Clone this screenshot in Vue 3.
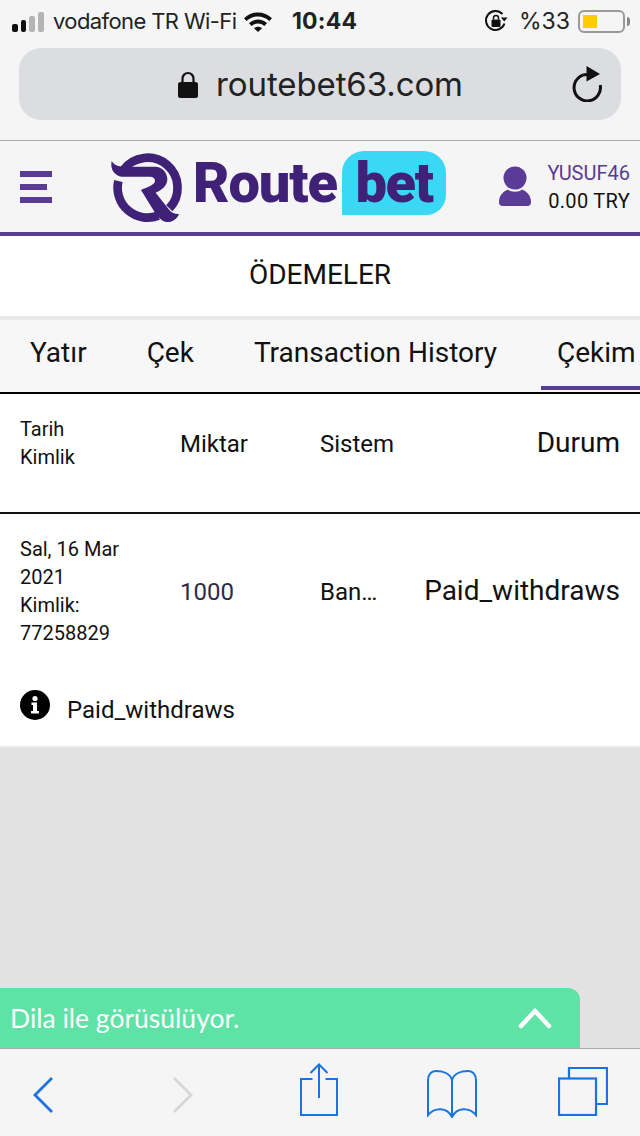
<script setup>
const tabs = [
  { label: 'Yatır', cls: 'tab-a' },
  { label: 'Çek', cls: 'tab-b' },
  { label: 'Transaction History', cls: 'tab-c' },
  { label: 'Çekim', cls: 'tab-d active' },
]
</script>

<template>
  <div class="phone">
    <div class="browser-top">
      <div class="status">
        <div class="signal"><i class="b1"></i><i class="b2"></i><i class="b3"></i><i class="b4"></i></div>
        <span class="carrier">vodafone TR Wi-Fi</span>
        <svg class="wifi" width="30" height="22" viewBox="0 0 30 22">
          <path d="M1 8.200C9 .6 21 .6 29 8.200l-2.600 2.700C19.900 4.900 10.100 4.900 3.600 10.900z" fill="#111"/>
          <path d="M6 13.200c5.200-4.800 12.800-4.800 18 0l-2.600 2.700c-3.800-3.300-9-3.300-12.800 0z" fill="#111"/>
          <path d="M11 18.200c2.400-2 5.600-2 8 0L15 22z" fill="#111"/>
        </svg>
        <span class="time">10:44</span>
        <svg class="rot" width="24" height="24" viewBox="0 0 24 24">
          <path d="M20.500 14.500A9.500 9.500 0 1 1 18.500 5" fill="none" stroke="#111" stroke-width="2"/>
          <path d="M23.500 8.500l-3.200 4-3.400-4z" fill="#111"/>
          <rect x="7.500" y="10.500" width="9" height="7.500" rx="1.200" fill="#111"/>
          <path d="M9.500 10.500V9a2.500 2.500 0 0 1 5 0v1.500" fill="none" stroke="#111" stroke-width="1.500"/>
        </svg>
        <span class="pct">%33</span>
        <div class="battery"><i></i></div>
        <div class="nub"></div>
      </div>
      <div class="url">
        <svg class="lock" width="20" height="27" viewBox="0 0 20 27">
          <path d="M4.500 12V7.500a5.500 5.500 0 0 1 11 0V12" fill="none" stroke="#111" stroke-width="2.200"/>
          <rect y="11" width="20" height="16" rx="2.500" fill="#111"/>
        </svg>
        <span class="domain">routebet63.com</span>
        <svg class="reload" width="32" height="36" viewBox="0 0 32 36">
          <path d="M17 8.500A13.200 13.200 0 1 0 29.200 19" fill="none" stroke="#111" stroke-width="3"/>
          <path d="M15.500 0L29 8 15.500 15.500z" fill="#111"/>
        </svg>
      </div>
    </div>

    <header class="site-head">
      <div class="burger"><i></i><i class="short"></i><i></i></div>
      <div class="logo">
        <svg class="mark" width="85" height="80" viewBox="0 0 255 240">
          <path d="M55 72A90 90 0 1 1 193 187" fill="none" stroke="#3f2178" stroke-width="26"/>
          <path d="M40 105A90 90 0 0 0 160 209" fill="none" stroke="#3f2178" stroke-width="26"/>
          <path d="M20 45C28 58 40 62 60 62H150C172 62 187 80 187 100C187 118 172 132 152 140L190 188C198 200 210 205 222 204C216 220 200 230 186 228C170 226 160 212 150 200L108 132C122 124 150 118 150 104C150 96 142 92 135 92H50C30 90 14 70 20 45Z" fill="#3f2178"/>
        </svg>
        <span class="route">Route</span>
        <span class="bet">bet</span>
      </div>
      <div class="account">
        <svg class="user" width="32" height="42" viewBox="0 0 32 42">
          <circle cx="16" cy="12" r="11.500" fill="#5a3b95"/>
          <path d="M0 36C0 29 5 25 9 23.500C12 26.500 20 26.500 23 23.500C27 25 32 29 32 36C32 39 30.500 40 28 40H4C1.500 40 0 39 0 36Z" fill="#5a3b95"/>
        </svg>
        <div class="acc-text">
          <div class="acc-name">YUSUF46</div>
          <div class="acc-bal">0.00 TRY</div>
        </div>
      </div>
    </header>

    <div class="title">ÖDEMELER</div>

    <nav class="tabs">
      <span v-for="t in tabs" :key="t.label" class="tab" :class="t.cls">{{ t.label }}</span>
    </nav>

    <section class="table">
      <div class="row head">
        <div class="c-date">Tarih<br>Kimlik</div>
        <div class="c-amt">Miktar</div>
        <div class="c-sys">Sistem</div>
        <div class="c-stat">Durum</div>
      </div>
      <div class="row body">
        <div class="c-date">Sal, 16 Mar<br>2021<br>Kimlik:<br>77258829</div>
        <div class="c-amt num">1000</div>
        <div class="c-sys">Ban…</div>
        <div class="c-stat big">Paid_withdraws</div>
      </div>
      <div class="info">
        <svg width="30" height="30" viewBox="0 0 30 30">
          <circle cx="15" cy="15" r="15" fill="#000"/>
          <circle cx="15" cy="8.500" r="2.600" fill="#fff"/>
          <path d="M11.500 12.500h5.500v8.500h2v2.500h-8v-2.500h2v-6h-1.500z" fill="#fff"/>
        </svg>
        <span>Paid_withdraws</span>
      </div>
    </section>

    <main class="empty">
      <div class="chat">
        <span>Dila ile görüsülüyor.</span>
        <svg width="34" height="22" viewBox="0 0 34 22">
          <path d="M3 19L17 4l14 15" fill="none" stroke="#fff" stroke-width="4.500" stroke-linecap="round"/>
        </svg>
      </div>
    </main>

    <footer class="toolbar">
      <svg class="t-back" width="20" height="36" viewBox="0 0 20 36">
        <path d="M19 1L2 18l17 17" fill="none" stroke="#1a73e0" stroke-width="2.800"/>
      </svg>
      <svg class="t-fwd" width="20" height="36" viewBox="0 0 20 36">
        <path d="M1 1l17 17L1 35" fill="none" stroke="#d6d6d8" stroke-width="2.800"/>
      </svg>
      <svg class="t-share" width="38" height="53" viewBox="0 0 38 53">
        <path d="M12.500 16H1v36h36V16H25.500" fill="none" stroke="#1a73e0" stroke-width="2"/>
        <path d="M19 35V2M10.500 10L19 1.500 27.500 10" fill="none" stroke="#1a73e0" stroke-width="2"/>
      </svg>
      <svg class="t-book" width="50" height="48" viewBox="0 0 50 48">
        <path d="M25 10C23 3 15 1 9 1C4 1 1 5 1 10V45C8 37 20 37 25 47C30 37 42 37 49 45V10C49 5 46 1 41 1C35 1 27 3 25 10ZM25 10V47" fill="none" stroke="#1a73e0" stroke-width="2"/>
      </svg>
      <svg class="t-tabs" width="50" height="49" viewBox="0 0 50 49">
        <path d="M11 11V1h38v36H38" fill="none" stroke="#1a73e0" stroke-width="2.200"/>
        <rect x="1" y="11.500" width="37" height="36.500" fill="none" stroke="#1a73e0" stroke-width="2.200"/>
      </svg>
    </footer>
  </div>
</template>

<style>
html, body { margin: 0; padding: 0; }
</style>

<style scoped>
.phone {
  width: 640px;
  height: 1136px;
  display: flex;
  flex-direction: column;
  overflow: hidden;
  background: #e2e2e2;
  font-family: Roboto, "Liberation Sans", sans-serif;
  color: #111;
}
.browser-top {
  box-sizing: border-box;
  background: #f5f5f5;
  border-bottom: 1px solid #aaa;
  flex: none;
  height: 141px;
}
.status {
  height: 42px;
  display: flex;
  align-items: center;
  padding-left: 12px;
  font-family: Inter, "Liberation Sans", sans-serif;
  font-size: 23px;
  color: #222;
}
.signal { display: flex; align-items: flex-end; gap: 3px; height: 21px; width: 34px; }
.signal i { display: block; width: 5.500px; border-radius: 2px; background: #111; }
.signal .b1 { height: 8px; }
.signal .b2 { height: 12px; }
.signal .b3 { height: 16px; background: #b4b4b4; }
.signal .b4 { height: 20px; background: #b4b4b4; width: 6px; }
.carrier { margin-left: 7px; width: 184px; font-size: 22px; letter-spacing: -0.6px; white-space: nowrap; }
.wifi { margin-left: 6px; }
.time { margin-left: 19px; width: 65px; font-weight: 700; letter-spacing: 0.2px; }
.rot { margin-left: 127px; }
.pct { margin-left: 11px; width: 51px; }
.battery {
  margin-left: 8px;
  width: 47px;
  height: 23px;
  box-sizing: border-box;
  border: 2px solid #999;
  border-radius: 6px;
  padding: 3px;
}
.battery i { display: block; width: 14px; height: 100%; background: #ffcc00; }
.nub { width: 3px; height: 9px; margin-left: 2px; background: #888; border-radius: 0 3px 3px 0; }
.url {
  margin: 6px 19px 0;
  height: 72px;
  border-radius: 22px;
  background: #dcdde0;
  display: flex;
  align-items: center;
  padding-left: 159px;
  font-family: Inter, "Liberation Sans", sans-serif;
}
.domain { margin-left: 18px; width: 244px; font-size: 33px; letter-spacing: -0.1px; white-space: nowrap; color: #222; }
.reload { margin-left: 111px; }

.site-head {
  flex: none;
  height: 95px;
  box-sizing: border-box;
  border-bottom: 4px solid #5a3b95;
  background: #f5f5f5;
  display: flex;
  align-items: center;
}
.burger { margin-left: 20px; width: 32px; display: flex; flex-direction: column; gap: 7px; margin-top: 1px; }
.burger i { display: block; height: 6px; background: #5a3b95; }
.burger .short { width: 27px; }
.logo { margin-left: 53px; display: flex; align-items: center; height: 80px; }
.mark { margin-top: -2px; }
.route {
  margin-left: 3px;
  width: 149px;
  font-weight: 900;
  font-size: 56px;
  letter-spacing: -1.1px;
  color: #3f2178;
  line-height: 1;
  margin-top: -7px;
}
.bet {
  box-sizing: border-box;
  width: 104px;
  height: 64px;
  margin-top: -8px;
  background: #3ad8f5;
  border-radius: 22px 22px 20px 0;
  font-weight: 900;
  font-size: 56px;
  letter-spacing: -1.500px;
  color: #3f2178;
  text-align: center;
  line-height: 64px;
}
.account { margin-left: auto; display: flex; align-items: center; padding-right: 10px; }
.user { margin-right: 17px; }
.acc-text { text-align: right; font-size: 20px; line-height: 28px; }
.acc-name { color: #5a3b95; }
.acc-bal { color: #111; letter-spacing: 0.3px; }

.title {
  flex: none;
  height: 80px;
  box-sizing: border-box;
  padding-bottom: 4px;
  background: #fff;
  display: flex;
  align-items: center;
  justify-content: center;
  font-size: 28px;
  color: #111;
}
.tabs {
  flex: none;
  height: 78px;
  box-sizing: border-box;
  display: flex;
  background: #f7f7f7;
  border-top: 4px solid #e8e8e8;
  border-bottom: 2px solid #000;
  padding-left: 14px;
  overflow: hidden;
  font-size: 28px;
}
.tab { display: block; padding: 0 16px; line-height: 65px; white-space: nowrap; flex: none; height: 70px; box-sizing: border-box; }
.tab-b { margin-left: 28px; }
.tab-c { margin-left: 28px; }
.tab-d { margin-left: 28px; padding-right: 40px; }
.active { border-bottom: 4px solid #5a3b95; }

.table { flex: none; background: #fff; border-bottom: 2px solid #e8e8e8; }
.row {
  display: grid;
  grid-template-columns: 160px 140px 1fr auto;
  align-items: center;
  padding: 0 20px;
}
.row.head { height: 118px; border-bottom: 2px solid #111; align-items: start; }
.row.head > div { margin-top: 22px; }
.row.head > .c-date { margin-top: 21px; }
.c-date { font-size: 20px; line-height: 28px; }
.c-amt, .c-sys { font-size: 24px; line-height: 56px; }
.c-stat { font-size: 28px; line-height: 54px; }
.row.body { height: 156px; }
.row.body > .c-date { margin-top: -2px; }
.row.body > .big { margin-top: -2px; }
.num { color: #2b2b4d; }
.info {
  height: 76px;
  box-sizing: border-box;
  padding: 0 0 2px 20px;
  display: flex;
  align-items: center;
  gap: 17px;
  font-size: 24px;
}
.info span { margin-top: 6px; }
.info svg { margin-top: -4px; }

.empty {
  flex: 1;
  min-height: 0;
  display: flex;
  align-items: flex-end;
  background: #e2e2e2;
}
.chat {
  width: 580px;
  height: 60px;
  box-sizing: border-box;
  background: #5ee2a5;
  border-radius: 0 12px 0 0;
  padding: 0 28px 0 10px;
  display: flex;
  align-items: center;
  justify-content: space-between;
  color: #fff;
  font-family: Lato, "Open Sans", sans-serif;
  font-size: 26.500px;
}
.toolbar {
  flex: none;
  height: 88px;
  box-sizing: border-box;
  background: #f5f5f5;
  border-top: 1px solid #aaa;
  display: flex;
  align-items: flex-start;
  padding-left: 33px;
}
.t-back { margin-top: 28px; }
.t-fwd { margin-top: 28px; margin-left: 120px; }
.t-share { margin-top: 14px; margin-left: 107px; }
.t-book { margin-top: 21px; margin-left: 89px; }
.t-tabs { margin-top: 18px; margin-left: 81px; }
</style>
